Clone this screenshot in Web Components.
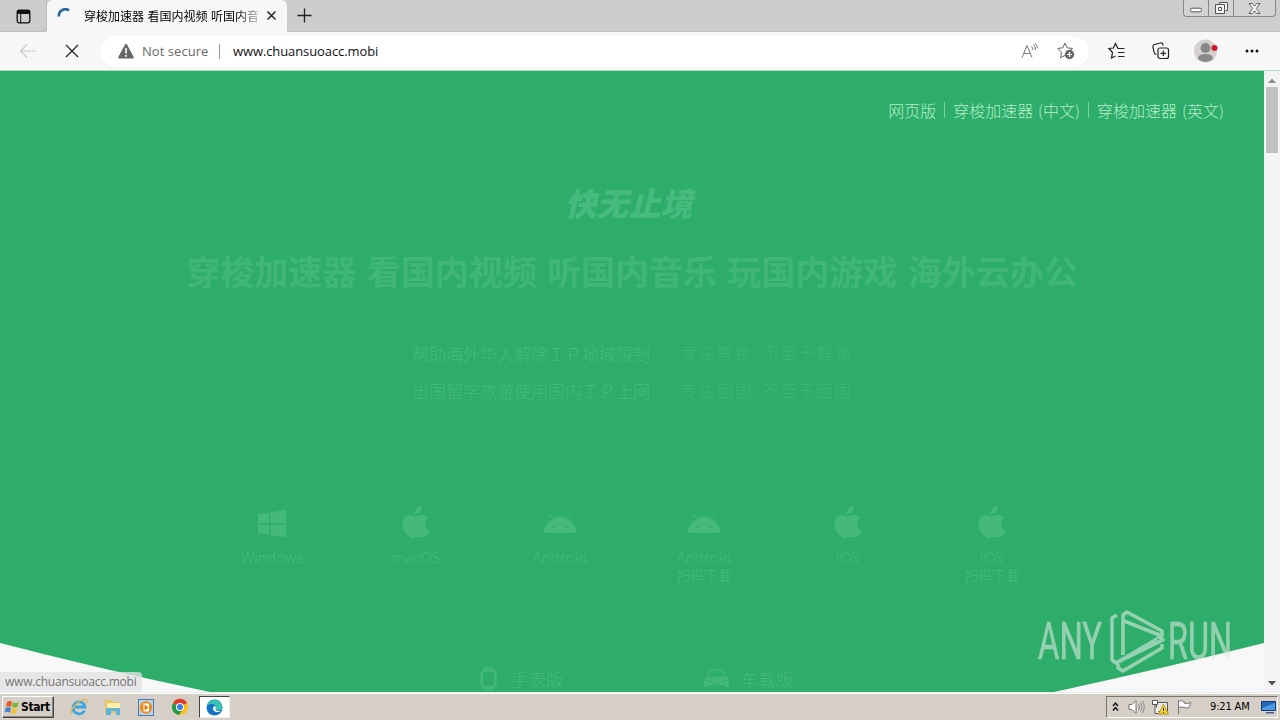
<!DOCTYPE html>
<html lang="zh-CN">
<head>
<meta charset="utf-8">
<title>穿梭加速器</title>
<style>
	html, body {
		margin: 0;
		width: 1280px;
		height: 720px;
		overflow: hidden;
	}
	body {
		font-family: 'Open Sans', 'Noto Sans CJK SC', sans-serif;
		font-size: 13px;
		color: #111;
	}
</style>
</head>
<body>
<desktop-screen>
	<tab-strip>穿梭加速器 看国内视频 听国内音</tab-strip>
	<address-bar>www.chuansuoacc.mobi</address-bar>
	<page-view>
		<top-nav>
			<span>网页版</span>
			<span>穿梭加速器 (中文)</span>
			<span>穿梭加速器 (英文)</span>
		</top-nav>
		<hero-banner>
			<span slot="logo">快无止境</span>
			<span slot="title">穿梭加速器 看国内视频 听国内音乐 玩国内游戏 海外云办公</span>
			<span slot="a">帮助海外华人解除ＩＰ地域限制</span>
			<span slot="b">专注解锁 不至于解锁</span>
			<span slot="c">出国留学旅游使用国内ＩＰ上网</span>
			<span slot="d">专注回国 不至于回国</span>
		</hero-banner>
		<platform-list>
			<platform-item icon="windows">Windows</platform-item>
			<platform-item icon="apple">macOS</platform-item>
			<platform-item icon="android">Android</platform-item>
			<platform-item icon="android" note="扫码下载">Android</platform-item>
			<platform-item icon="apple">IOS</platform-item>
			<platform-item icon="apple" note="扫码下载">IOS</platform-item>
		</platform-list>
		<device-links></device-links>
		<status-bubble slot="overlay">www.chuansuoacc.mobi</status-bubble>
		<run-watermark slot="overlay"></run-watermark>
	</page-view>
	<task-bar></task-bar>
</desktop-screen>

<script>
const html = String.raw; // dev-only helper for formatting

function define(name, markup) {
	customElements.define(name, class extends HTMLElement {
		constructor() {
			super();
			this.attachShadow({ mode: 'open' }).innerHTML = markup;
		}
	});
}

define('desktop-screen', html`
	<style>
		:host {
			display: flex;
			flex-direction: column;
			width: 1280px;
			height: 720px;
			background: #f7f7f7;
		}
	</style>
	<slot></slot>
`);

define('tab-strip', html`
	<style>
		:host {
			display: flex;
			height: 32px;
			background: #cdcdcd;
			flex: none;
		}
		.menu {
			width: 47px;
			display: flex;
			align-items: center;
			justify-content: center;
			border-radius: 0 0 5px 0;
			box-shadow: inset -1px -1px #bdbdbd;
			box-sizing: border-box;
		}
		.tab {
			display: flex;
			align-items: center;
			width: 240px;
			box-sizing: border-box;
			padding: 0 0 1px 10px;
			background: #f7f7f7;
			border-radius: 6px 6px 0 0;
		}
		.title {
			width: 174px;
			margin-left: 11px;
			overflow: hidden;
			white-space: nowrap;
			font: 12px/18px 'Noto Sans CJK SC', sans-serif;
			word-spacing: .8px;
			color: #000;
			-webkit-mask-image: linear-gradient(90deg, #000 152px, transparent 182px);
		}
		.close { margin-left: 8px; }
		.rest {
			flex: 1;
			display: flex;
			justify-content: space-between;
			padding-left: 9px;
			border-bottom: 1px solid #c0c0c0;
		}
		.plus { margin-top: 7px; }
		.win {
			display: flex;
			margin-right: 4px;
			width: 93px;
			height: 17px;
			box-sizing: border-box;
			border: 1px solid #888;
			border-top: 0;
			border-radius: 0 0 4px 4px;
			background: #d3d3d3;
		}
		.win span {
			display: flex;
			justify-content: center;
			align-items: center;
			width: 24px;
			border-right: 1px solid #888;
		}
		.win span:last-child { flex: 1; border: 0; }
	</style>
	<div class="menu">
		<svg width="15" height="15" viewBox="0 0 15 15"><rect x="1.2" y="1.2" width="12.6" height="12.6" rx="2" fill="none" stroke="#111" stroke-width="1.3"/><path d="M1 1h13v4H1z" fill="#111"/><path d="M4.7 4v10" stroke="#111"/></svg>
	</div>
	<div class="tab">
		<svg width="16" height="16" viewBox="0 0 16 16"><path d="M2 8.500A6.300 6.300 0 0 1 12 2.500" fill="none" stroke="#24689f" stroke-width="2.600"/></svg>
		<div class="title"><slot></slot></div>
		<svg class="close" width="11" height="11" viewBox="0 0 11 11"><path d="M1.500 1.500l8 8m0-8l-8 8" stroke="#222" stroke-width="1.500"/></svg>
	</div>
	<div class="rest">
		<svg class="plus" width="16" height="16" viewBox="0 0 16 16"><path d="M8.500 1.500v14M1.500 8.500h14" stroke="#222" stroke-width="1.300"/></svg>
		<div class="win">
			<span><svg width="12" height="16"><rect x=".7" y="8.200" width="10.600" height="3.600" rx="1" fill="#fff" stroke="#555"/></svg></span>
			<span><svg width="13" height="16"><path d="M4.500 4.500v-2h8v8h-2M.500 4.500h9v9h-9zM3.500 7.500h3v3h-3z" fill="#f4f4f4" stroke="#555"/></svg></span>
			<span><svg width="13" height="13" viewBox="0 0 13 13"><path d="M1 1.500h3.300l2.200 2.700 2.200-2.700H12L8.300 6.500 12 11.500H8.700L6.500 8.800l-2.200 2.700H1l3.700-5z" fill="#f5f5f5" stroke="#555" stroke-width=".9"/></svg></span>
		</div>
	</div>
`);

define('address-bar', html`
	<style>
		:host {
			display: flex;
			align-items: center;
			flex: none;
			height: 39px;
			box-sizing: border-box;
			border-bottom: 1px solid #b8d8c6;
			background: #f7f7f7;
			padding-left: 19px;
		}
		.stop { margin-left: 27px; }
		.field {
			display: flex;
			align-items: center;
			margin-left: 20px;
			width: 989px;
			height: 31px;
			box-sizing: border-box;
			padding: 0 14px 0 18px;
			border-radius: 16px;
			background: #fff;
			box-shadow: 0 0 1px #e2e2e2;
			line-height: 18px;
		}
		.warn {
			margin-left: 8px;
			width: 67px;
			white-space: nowrap;
			color: #6a6a6a;
			letter-spacing: .05px;
		}
		.sep {
			width: 1px;
			height: 15px;
			margin: 0 13px 0 10px;
			background: #999;
		}
		.url {
			flex: 1;
			color: #111;
			letter-spacing: -.1px;
		}
		.field svg:last-child { margin-left: 18px; }
		.tools {
			display: flex;
			align-items: center;
			flex: 1;
			padding-left: 19px;
		}
		.tools svg { flex: none; }
	</style>
	<svg width="18" height="16" viewBox="0 0 18 16"><path d="M1.500 8H17M8 1.500L1.500 8 8 14.500" fill="none" stroke="#c9c9c9" stroke-width="1.200"/></svg>
	<svg class="stop" width="16" height="16" viewBox="0 0 16 16"><path d="M2 2l12 12M14 2L2 14" stroke="#222" stroke-width="1.200"/></svg>
	<div class="field">
		<svg width="16" height="16" viewBox="0 0 16 16"><path d="M7 1.500Q8 0 9 1.500L15.700 14Q16 15.500 15 15.500H1Q0 15.500.300 14z" fill="#666"/><path d="M8 5v5.500M8 12v1.800" stroke="#fff" stroke-width="1.600"/></svg>
		<span class="warn">Not secure</span>
		<span class="sep"></span>
		<span class="url"><slot></slot></span>
		<svg width="18" height="17" viewBox="0 0 18 17"><path d="M1 14.500L6 2.500l5 12M2.800 10.500h6.400M10.500 3.500q1.600 1.500 1.300 3.500M12.500 1.500q2.500 2.500 1.800 5.500M14.300.500q2.500 2.500 2 5" fill="none" stroke="#777"/></svg>
		<svg width="18" height="18" viewBox="0 0 18 18"><path d="M8 1l2.100 4.800 5.400.6-4 3.600M8 13.500l-4.500 2.300 1.100-5.500L.700 6.400l5.200-.6L8 1" fill="none" stroke="#666"/><circle cx="12.500" cy="12.500" r="4.700" fill="#666"/><path d="M12.500 10v5M10 12.500h5" stroke="#fff" stroke-width="1.200"/></svg>
	</div>
	<div class="tools">
		<svg width="18" height="18" viewBox="0 0 18 18"><path d="M16.500 6.500H10L7.500 1.500 5.400 6 .900 6.500l3.600 4-1 5.500 4-2M10 10.500h6.500M10 14.500h6.500" fill="none" stroke="#222" stroke-width="1.200"/></svg>
		<svg style="margin-left:26px" width="18" height="18" viewBox="0 0 18 18"><rect x="6" y="6" width="10.500" height="10.500" rx="2" fill="none" stroke="#222" stroke-width="1.200"/><path d="M4.500 12.500q-2 0-2.300-2L.900 4.800Q.700 3 2.400 2.500L8.500 1q2-.3 2.500 1.600l.2 1M11.300 8.500v5.500M8.500 11.300H14" fill="none" stroke="#222" stroke-width="1.200"/></svg>
		<svg style="margin-left:23px" width="26" height="26" viewBox="0 0 26 26"><circle cx="12.500" cy="13" r="11.500" fill="#d4d0ce"/><circle cx="12.500" cy="10" r="5" fill="#888"/><path d="M5 21q0-5 7.500-5t7.500 5q-7.500 6-15 0" fill="#888"/><circle cx="21.500" cy="10" r="3" fill="#d2162a"/></svg>
		<svg style="margin-left:25px" width="16" height="6" viewBox="0 0 16 6"><g fill="#111"><circle cx="3" cy="3" r="1.500"/><circle cx="8" cy="3" r="1.500"/><circle cx="13" cy="3" r="1.500"/></g></svg>
	</div>
`);

define('page-view', html`
	<style>
		:host {
			position: relative;
			display: grid;
			grid-template-columns: 1264px 16px;
			height: 621px;
			flex: none;
			overflow: hidden;
		}
		.page {
			display: flex;
			flex-direction: column;
			height: 621px;
			overflow: hidden;
			color: #40b777;
			background: url("data:image/svg+xml,%3Csvg xmlns='http://www.w3.org/2000/svg' width='1264' height='621'%3E%3Cpath d='M0 0H1264V572Q1160 598 1054 621H210Q104 599 0 572z' fill='%232dad69'/%3E%3C/svg%3E") #f8f8f8;
		}
		.bar {
			display: flex;
			flex-direction: column;
			align-items: center;
			background: #f3f3f3;
			padding: 7px 0 6px;
		}
		.thumb {
			width: 12px;
			height: 66px;
			margin: 4px 0 auto;
			background: #c1c1c1;
		}
	</style>
	<div class="page"><slot></slot></div>
	<div class="bar">
		<svg width="8" height="5"><path d="M0 5l4-4.500L8 5z" fill="#8a8a8a"/></svg>
		<div class="thumb"></div>
		<svg width="8" height="5"><path d="M0 0l4 4.500L8 0z" fill="#505050"/></svg>
	</div>
	<slot name="overlay"></slot>
`);

define('top-nav', html`
	<style>
		:host {
			display: flex;
			justify-content: flex-end;
			align-items: center;
			height: 20px;
			margin: 29px 40px 1px 0;
			font: 300 16px/20px 'Noto Sans CJK SC', sans-serif;
			word-spacing: 1.300px;
			color: #b4edca;
		}
		::slotted(span) {
			padding: 0 8px;
			border-left: 1px solid #7bd19f;
			line-height: 16px;
			white-space: nowrap;
		}
		::slotted(span:first-child) { border: 0; }
		::slotted(span:last-child) { padding-right: 0; }
	</style>
	<slot></slot>
`);

define('hero-banner', html`
	<style>
		:host {
			display: flex;
			flex-direction: column;
			align-items: center;
			height: 364px;
			white-space: nowrap;
			font-family: 'Noto Sans CJK SC', sans-serif;
		}
		.logo {
			margin-top: 61px;
			font-size: 32px;
			font-weight: 900;
			line-height: 40px;
			color: #47bb7e;
			transform: skewX(-14deg);
		}
		.title {
			margin-top: 29px;
			font-size: 34px;
			font-weight: 700;
			line-height: 40px;
			word-spacing: 2.600px;
		}
		.lines {
			display: grid;
			grid-template-columns: 238px 171px;
			column-gap: 31px;
			margin-top: 44px;
			grid-auto-rows: 37px;
			font-size: 17px;
			font-weight: 300;
			line-height: 37px;
			color: #45ba7b;
		}
		.small {
			font-size: 16px;
			letter-spacing: 2px;
			word-spacing: 4px;
			color: #3fb676;
		}
		.up { line-height: 34px; }
	</style>
	<div class="logo"><slot name="logo"></slot></div>
	<div class="title"><slot name="title"></slot></div>
	<div class="lines">
		<slot name="a"></slot>
		<div class="small up"><slot name="b"></slot></div>
		<slot name="c"></slot>
		<div class="small"><slot name="d"></slot></div>
	</div>
`);

define('platform-list', html`
	<style>
		:host {
			display: grid;
			grid-template-columns: repeat(6, 144px);
			justify-content: center;
			height: 104px;
			margin-top: 20px;
		}
	</style>
	<slot></slot>
`);

const icons = {
	windows: '<path d="M3 9l11-1.600V18H3zM15.300 7.200L31 5v13H15.300zM3 19.400h11V30L3 28.500zM15.300 19.400H31v13l-15.700-2.200z"/>',
	apple: '<path d="M22.500 1q.4 4-2 6.300-2 2.300-5 2.200-.2-3.500 2-5.800Q19.500 1.300 22.500 1M29.500 12.600q-4 2.500-3.700 6.600.3 5 4.700 6.700-1.300 3.500-3.600 5.200-2 2.200-4.900 1.300-3.500-1.500-7 0-3 1-5.500-1.300Q3 25.500 3.500 18.700q.7-7.500 7-8.700 2.500-.2 5.300 1 1.200.5 2.500 0 7.200-3.200 11.200 1.600"/>',
	android: '<path d="M1 28a16 16 0 0 1 32 0z"/><path d="M6 9l4 6M28 9l-4 6" stroke="#3fb676" stroke-width="1.500"/><path d="M9.500 22h2M22.500 22h2" stroke="#2dad69" stroke-width="2"/>'
};

class PlatformItem extends HTMLElement {
	constructor() {
		super();
		const note = this.getAttribute('note') || '';
		this.attachShadow({ mode: 'open' }).innerHTML = html`
			<style>
				:host {
					display: flex;
					flex-direction: column;
					align-items: center;
					font: 300 15.300px/20px 'Open Sans', 'Noto Sans CJK SC', sans-serif;
					color: #47bb7d;
				}
				svg {
					width: 34px;
					height: 36px;
					margin: 1px 0 6px;
				}
				.note {
					font: 300 14px/18px 'Noto Sans CJK SC', sans-serif;
					margin-top: -1px;
				}
			</style>
			<svg viewBox="0 0 34 36" fill="#45b97a">${icons[this.getAttribute('icon')]}</svg>
			<slot></slot>
			<span class="note">${note}</span>
		`;
	}
}
customElements.define('platform-item', PlatformItem);

define('device-links', html`
	<style>
		:host {
			display: flex;
			align-items: center;
			height: 26px;
			margin: 58px 0 0 478px;
			font: 300 17.500px/26px 'Noto Sans CJK SC', sans-serif;
			color: #45ba7b;
		}
		.watch { margin-right: 13px; }
		.car { margin: 0 11px 0 139px; }
	</style>
	<svg class="watch" width="20" height="26" viewBox="0 0 20 26"><rect x="3.500" y="4.500" width="14" height="17" rx="4" fill="none" stroke="#43b879" stroke-width="2.500"/><path d="M6 1h9v3H6zM6 22h9v3H6z" fill="#3fb676"/></svg>
	<span>手表版</span>
	<svg class="car" width="27" height="22" viewBox="0 0 27 22"><path d="M6 3q1-2 3-2h9q2 0 3 2l2 5 3 3v8h-5v-2H6v2H1v-8l3-3z" fill="#41b778"/><path d="M8 3h11l2 5H6zM4 12l5 2M23 12l-5 2M10 16h7" fill="#2dad69" stroke="#2dad69"/></svg>
	<span>车载版</span>
`);

define('status-bubble', html`
	<style>
		:host {
			position: absolute;
			left: 0;
			bottom: 0;
			width: 142px;
			height: 20px;
			box-sizing: border-box;
			padding-left: 5px;
			border-radius: 0 4px 0 0;
			background: rgba(225, 225, 225, .78);
			color: #777;
			font-size: 12px;
			letter-spacing: -.22px;
			line-height: 20px;
			white-space: nowrap;
		}
	</style>
	<slot></slot>
`);

// Translucent sandbox mark over the page corner
define('run-watermark', html`
	<style>
		:host {
			position: absolute;
			left: 1036px;
			top: 536px;
			display: block;
			opacity: .58;
		}
	</style>
	<svg width="210" height="70" viewBox="0 0 210 70">
		<g fill="#dfe9e3" stroke="#dfe9e3" stroke-width=".6" font-family="Roboto, sans-serif" font-size="51">
			<text x="2" y="52" textLength="64" lengthAdjust="spacingAndGlyphs">ANY</text>
			<text x="132" y="52" textLength="64" lengthAdjust="spacingAndGlyphs">RUN</text>
		</g>
		<g fill="none" stroke="#e3eee7" stroke-width="3.500" stroke-linejoin="round">
			<path d="M81 8L76 11V53L80 56L127 33L121 29"/>
			<path d="M87 48V8L91 5L126 24V29L88 14"/>
			<path d="M80 56L121 32M126 37V41L87 64L82 61V57"/>
		</g>
	</svg>
`);

define('task-bar', html`
	<style>
		:host {
			display: flex;
			align-items: center;
			flex: 1;
			box-sizing: border-box;
			border-top: 1px solid #eee;
			box-shadow: inset 0 1px #fff;
			background: #d6cfc8;
			padding: 2px 2px 1px;
		}
		.start {
			display: flex;
			align-items: center;
			width: 52px;
			height: 22px;
			box-sizing: border-box;
			border: 1px solid;
			border-color: #fff #444 #444 #fff;
			box-shadow: inset -1px -1px #8b867f;
			font: bold 12px/18px 'DejaVu Sans Condensed', 'DejaVu Sans', sans-serif;
			letter-spacing: -.4px;
			color: #000;
			padding-left: 1px;
			gap: 1px;
		}
		.apps {
			display: flex;
			align-items: center;
			margin-left: 16px;
			gap: 16px;
		}
		.active {
			display: flex;
			align-items: center;
			justify-content: center;
			width: 31px;
			height: 22px;
			box-sizing: border-box;
			margin-left: -6px;
			border: 1px solid;
			border-color: #444 #eee #eee #444;
			background: #fff;
		}
		.tray {
			display: flex;
			align-items: center;
			margin-left: auto;
			width: 172px;
			height: 22px;
			box-sizing: border-box;
			border: 1px solid;
			border-color: #77736e #fff #fff #77736e;
			padding-left: 5px;
			font: 11px/18px 'DejaVu Sans Condensed', 'DejaVu Sans', sans-serif;
			color: #000;
		}
		.tray svg { flex: none; }
		.time {
			width: 41px;
			margin: 0 10px 0 16px;
			letter-spacing: -.15px;
			white-space: nowrap;
		}
	</style>
	<div class="start">
		<svg width="16" height="16" viewBox="0 0 16 16"><path d="M3 3q3-2 5 0L7 8Q4.500 6.500 2 8z" fill="#e5582b"/><path d="M9 3q3 2 6 0l-1.500 5Q11 9.500 8 8z" fill="#7dba3c"/><path d="M1.700 9Q4.500 7.500 7 9l-1 5Q3.500 12 .500 13.500z" fill="#3f83d0"/><path d="M8 9q3 1.500 5.500 0L12 14q-3 1.500-5 0z" fill="#f5c231"/></svg>
		<span>Start</span>
	</div>
	<div class="apps">
		<svg width="18" height="18" viewBox="0 0 18 18"><path d="M14.500 12.500A6 6 0 1 1 15 9H5" fill="none" stroke="#3ba6e2" stroke-width="2.800"/><path d="M1.500 15.500C-.500 11 12-1 16.500 2q1 1-.5 3.500" fill="none" stroke="#e5b93b" stroke-width="1.300"/></svg>
		<svg width="18" height="18" viewBox="0 0 18 18"><path d="M1 2h6l1 2h7v11H1z" fill="#e6c35f"/><path d="M3 5h13v5H3z" fill="#fbeeaa"/><path d="M2 10h14v7h-4v-4H7v4H2z" fill="#5fb4dc"/></svg>
		<svg width="17" height="17" viewBox="0 0 17 17"><rect x=".500" y=".500" width="15" height="16" fill="#b9d4ea" stroke="#4c7bb0"/><circle cx="8" cy="8.500" r="6.200" fill="#ef8a1b"/><path d="M5.500 4.500h5.500v8H5.500z" fill="#fff"/><path d="M6.500 5.500l4 3-4 3z" fill="#e8760c"/></svg>
		<svg width="18" height="18" viewBox="0 0 18 18"><circle cx="9" cy="9" r="8" fill="#fbc116"/><path d="M9 9L2 5A8 8 0 0 1 16 5z" fill="#e33b2e"/><path d="M9 9L2 5A8 8 0 0 0 8 17l4-6z" fill="#259b4a"/><circle cx="9" cy="9" r="4" fill="#fff"/><circle cx="9" cy="9" r="3" fill="#3b7de0"/></svg>
		<div class="active">
			<svg width="17" height="17" viewBox="0 0 17 17"><circle cx="8.500" cy="8.500" r="8" fill="#1474c4"/><path d="M.700 7A8 8 0 0 1 16.500 8q0 3.500-4 3.500-3.500 0-2.700-2.200Q10 5 5.500 5 2.500 5 .700 7" fill="#37c2b2"/><path d="M7 9q0-1.500 1.800-2 2 1 .9 2.500-.5 3 5 2.500-1.500 1.500-4.500 1Q7 12 7 9" fill="#fff"/></svg>
		</div>
	</div>
	<div class="tray">
		<svg width="8" height="12" viewBox="0 0 8 12"><path d="M1 5l2.500-3L6 5M1 9.500l2.500-3L6 9.500" fill="none" stroke="#111" stroke-width="1.400"/></svg>
		<svg style="margin-left:8px" width="18" height="16" viewBox="0 0 18 16"><path d="M1 5.500h3L8 1.500v13l-4-4H1z" fill="#fff" stroke="#777"/><path d="M10.500 5q2 3 0 6M12.500 3.500q3 4.500 0 9M14.500 2q3.500 6 0 12" fill="none" stroke="#888"/></svg>
		<svg style="margin-left:6px" width="18" height="16" viewBox="0 0 18 16"><path d="M4.500 3.500h11v9h-11z" fill="#e7e7e7" stroke="#555"/><path d="M.500 1.500h5v4h-5zM3 5.500v9h4" fill="#fff" stroke="#555"/><path d="M11.500 5.500L16.500 15h-10z" fill="#f8d824" stroke="#b89312"/><path d="M11.500 9v3M11.500 13v1" stroke="#222"/></svg>
		<svg style="margin-left:6px" width="18" height="16" viewBox="0 0 18 16"><path d="M2.500 15V1.500M2.500 2.500q3-2 5.500 0v1.500q3 1.500 7-.5l-2 5q-2.500 1-5 0-3-1-5.500 0z" fill="#fff" stroke="#777"/></svg>
		<span class="time">9:21 AM</span>
		<svg width="16" height="15" viewBox="0 0 16 15"><path d="M.500 1.500h14v9H.500z" fill="#2767ba" stroke="#163c75"/><path d="M1 8l13-5v7H1z" fill="#4c9be4"/><path d="M5 12h8v1.500H5z" fill="#425d7c"/></svg>
	</div>
`);
</script>
</body>
</html>
